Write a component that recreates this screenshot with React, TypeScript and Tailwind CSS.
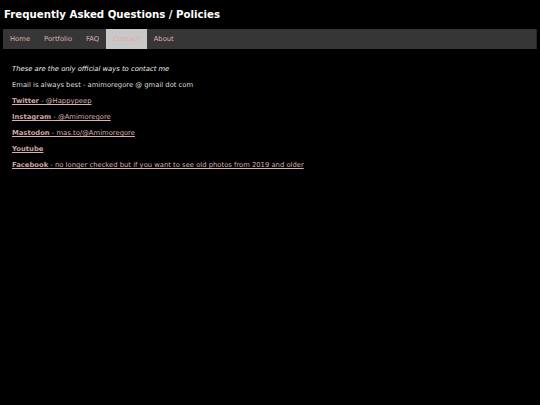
import React from "react";

const navItems = ["Home", "Portfolio", "FAQ", "Contact", "About"];

const links: { label: string; rest?: string }[] = [
  { label: "Twitter", rest: " - @Happypeep" },
  { label: "Instagram", rest: " - @Amimoregore" },
  { label: "Mastodon", rest: " - mas.to/@Amimoregore" },
  { label: "Youtube" },
  { label: "Facebook", rest: " - no longer checked but if you want to see old photos from 2019 and older" },
];

export default function App() {
  return (
    <div
      className="w-[540px] h-[405px] bg-black text-[#e0e0e0] overflow-hidden"
      style={{ fontFamily: '"DejaVu Sans", Verdana, sans-serif' }}
    >
      <h1 className="h-[29px] pl-[4px] pt-[7px] text-[10.2px] leading-[16px] font-bold text-white">
        Frequently Asked Questions / Policies
      </h1>
      <nav className="ml-[3px] w-[534px] h-[20px] bg-[#363636] border-r border-[#262626] flex text-[6.8px]">
        {navItems.map((n) => (
          <a
            key={n}
            className={
              n === "Contact"
                ? "px-[7px] flex items-center bg-[#c8c8c8] text-[#e4a8a8]"
                : "px-[7px] flex items-center text-[#d8b0b0]"
            }
          >
            {n}
          </a>
        ))}
      </nav>
      <div className="pl-[12px] pt-[12px] text-[6.8px] leading-[16px]">
        <p className="italic text-[#ececec]">These are the only official ways to contact me</p>
        <p className="text-[#dedede]">Email is always best - amimoregore @ gmail dot com</p>
        {links.map((l) => (
          <p key={l.label}>
            <a className="underline text-[#d8b0b0]">
              <span className="font-bold text-[#cca4a4]">{l.label}</span>
              {l.rest}
            </a>
          </p>
        ))}
      </div>
    </div>
  );
}
